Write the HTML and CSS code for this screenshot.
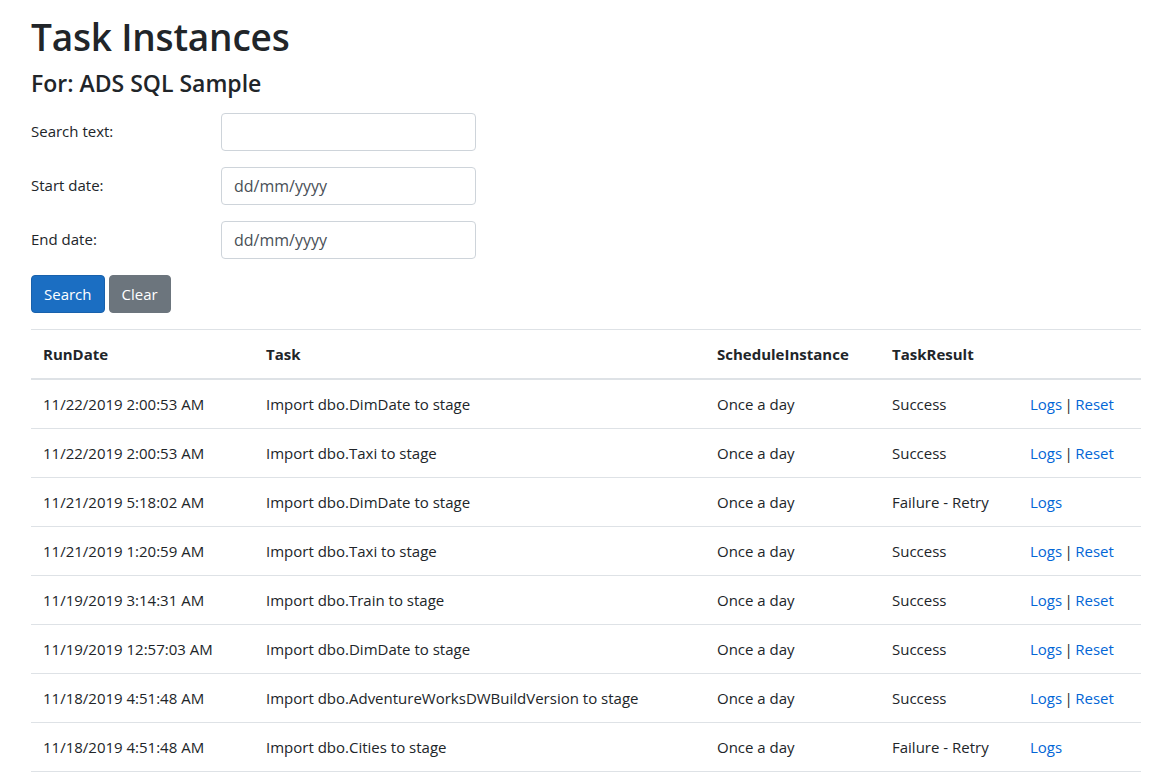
FILE: index.html
```html
<!DOCTYPE html>
<html lang="en">
<head>
<meta charset="utf-8">
<title>Task Instances</title>
<link rel="stylesheet" href="styles.css">
</head>
<body>
<div class="topshadow"></div>
<main class="container">
  <h1 class="title">Task Instances</h1>
  <h4 class="subtitle">For: ADS SQL Sample</h4>
  <form class="filters">
    <div class="form-row">
      <label class="form-label">Search text:</label>
      <input class="form-control" type="text">
    </div>
    <div class="form-row">
      <label class="form-label">Start date:</label>
      <input class="form-control" type="text" placeholder="dd/mm/yyyy">
    </div>
    <div class="form-row">
      <label class="form-label">End date:</label>
      <input class="form-control" type="text" placeholder="dd/mm/yyyy">
    </div>
    <div class="buttons">
      <button type="button" class="btn btn-primary">Search</button>
      <button type="button" class="btn btn-secondary">Clear</button>
    </div>
  </form>
  <table class="table">
    <colgroup>
      <col class="c1"><col class="c2"><col class="c3"><col class="c4"><col class="c5">
    </colgroup>
    <thead>
      <tr><th>RunDate</th><th>Task</th><th>ScheduleInstance</th><th>TaskResult</th><th></th></tr>
    </thead>
    <tbody>
      <tr><td>11/22/2019 2:00:53 AM</td><td>Import dbo.DimDate to stage</td><td>Once a day</td><td>Success</td><td class="actions"><a href="#">Logs</a> | <a href="#">Reset</a></td></tr>
      <tr><td>11/22/2019 2:00:53 AM</td><td>Import dbo.Taxi to stage</td><td>Once a day</td><td>Success</td><td class="actions"><a href="#">Logs</a> | <a href="#">Reset</a></td></tr>
      <tr><td>11/21/2019 5:18:02 AM</td><td>Import dbo.DimDate to stage</td><td>Once a day</td><td>Failure - Retry</td><td class="actions"><a href="#">Logs</a></td></tr>
      <tr><td>11/21/2019 1:20:59 AM</td><td>Import dbo.Taxi to stage</td><td>Once a day</td><td>Success</td><td class="actions"><a href="#">Logs</a> | <a href="#">Reset</a></td></tr>
      <tr><td>11/19/2019 3:14:31 AM</td><td>Import dbo.Train to stage</td><td>Once a day</td><td>Success</td><td class="actions"><a href="#">Logs</a> | <a href="#">Reset</a></td></tr>
      <tr><td>11/19/2019 12:57:03 AM</td><td>Import dbo.DimDate to stage</td><td>Once a day</td><td>Success</td><td class="actions"><a href="#">Logs</a> | <a href="#">Reset</a></td></tr>
      <tr><td>11/18/2019 4:51:48 AM</td><td>Import dbo.AdventureWorksDWBuildVersion to stage</td><td>Once a day</td><td>Success</td><td class="actions"><a href="#">Logs</a> | <a href="#">Reset</a></td></tr>
      <tr><td>11/18/2019 4:51:48 AM</td><td>Import dbo.Cities to stage</td><td>Once a day</td><td>Failure - Retry</td><td class="actions"><a href="#">Logs</a></td></tr>
    </tbody>
  </table>
</main>
</body>
</html>
```

FILE: styles.css
```css
* { box-sizing: border-box; }
html, body { margin: 0; padding: 0; background: #fff; }
body {
  font-family: "Segoe UI", "Open Sans", "Noto Sans", sans-serif;
  font-size: 16px;
  line-height: 1.5;
  color: #212529;
  overflow: hidden;
}
.topshadow {
  height: 0;
  box-shadow: 0 4px 12px rgba(0, 0, 0, 0.05);
}
.container {
  width: 1110px;
  margin-left: 31px;
  padding-top: 13px;
}
.title {
  font-size: 37px;
  font-weight: 600;
  line-height: 47px;
  margin: 0 0 9px;
  letter-spacing: -0.2px;
}
.subtitle {
  font-size: 23px;
  font-weight: 600;
  line-height: 28px;
  margin: 0 0 8px;
}
.filters { margin-top: 16px; }
.form-row {
  display: grid;
  grid-template-columns: 190px 255px;
  margin-bottom: 16px;
}
.form-label {
  padding-top: 7px;
  padding-bottom: 7px;
  font-size: 15px;
}
.form-control {
  height: 38px;
  padding: 6px 12px;
  font-family: inherit;
  font-size: 16px;
  color: #495057;
  background: #fff;
  border: 1px solid #ced4da;
  border-radius: 4px;
  outline: none;
}
.form-control::placeholder { color: #495057; opacity: 1; }
.buttons {
  display: flex;
  gap: 4px;
  margin-bottom: 16px;
}
.btn {
  height: 38px;
  padding: 6px 12px;
  font-family: inherit;
  font-size: 15px;
  line-height: 1.5;
  color: #fff;
  border: 1px solid transparent;
  border-radius: 4px;
}
.btn-primary { background: #1b6ec2; border-color: #1861ac; }
.btn-secondary { background: #6c757d; border-color: #6c757d; }
.table {
  width: 1110px;
  border-collapse: collapse;
  table-layout: fixed;
  font-size: 15px;
}
.c1 { width: 223px; }
.c2 { width: 451px; }
.c3 { width: 175px; }
.c4 { width: 138px; }
.c5 { width: 123px; }
.table th, .table td {
  padding: 12px;
  text-align: left;
  vertical-align: top;
  border-top: 1px solid #dee2e6;
  line-height: 24px;
  white-space: nowrap;
}
.table th {
  font-weight: 700;
  border-bottom: 2px solid #dee2e6;
}
.table thead + tbody tr:first-child td { border-top: 0; }
.table tbody tr:last-child td { border-bottom: 1px solid #dee2e6; }
.actions { word-spacing: -1.5px; }
a { color: #0366d6; text-decoration: none; word-spacing: 0; }
```
